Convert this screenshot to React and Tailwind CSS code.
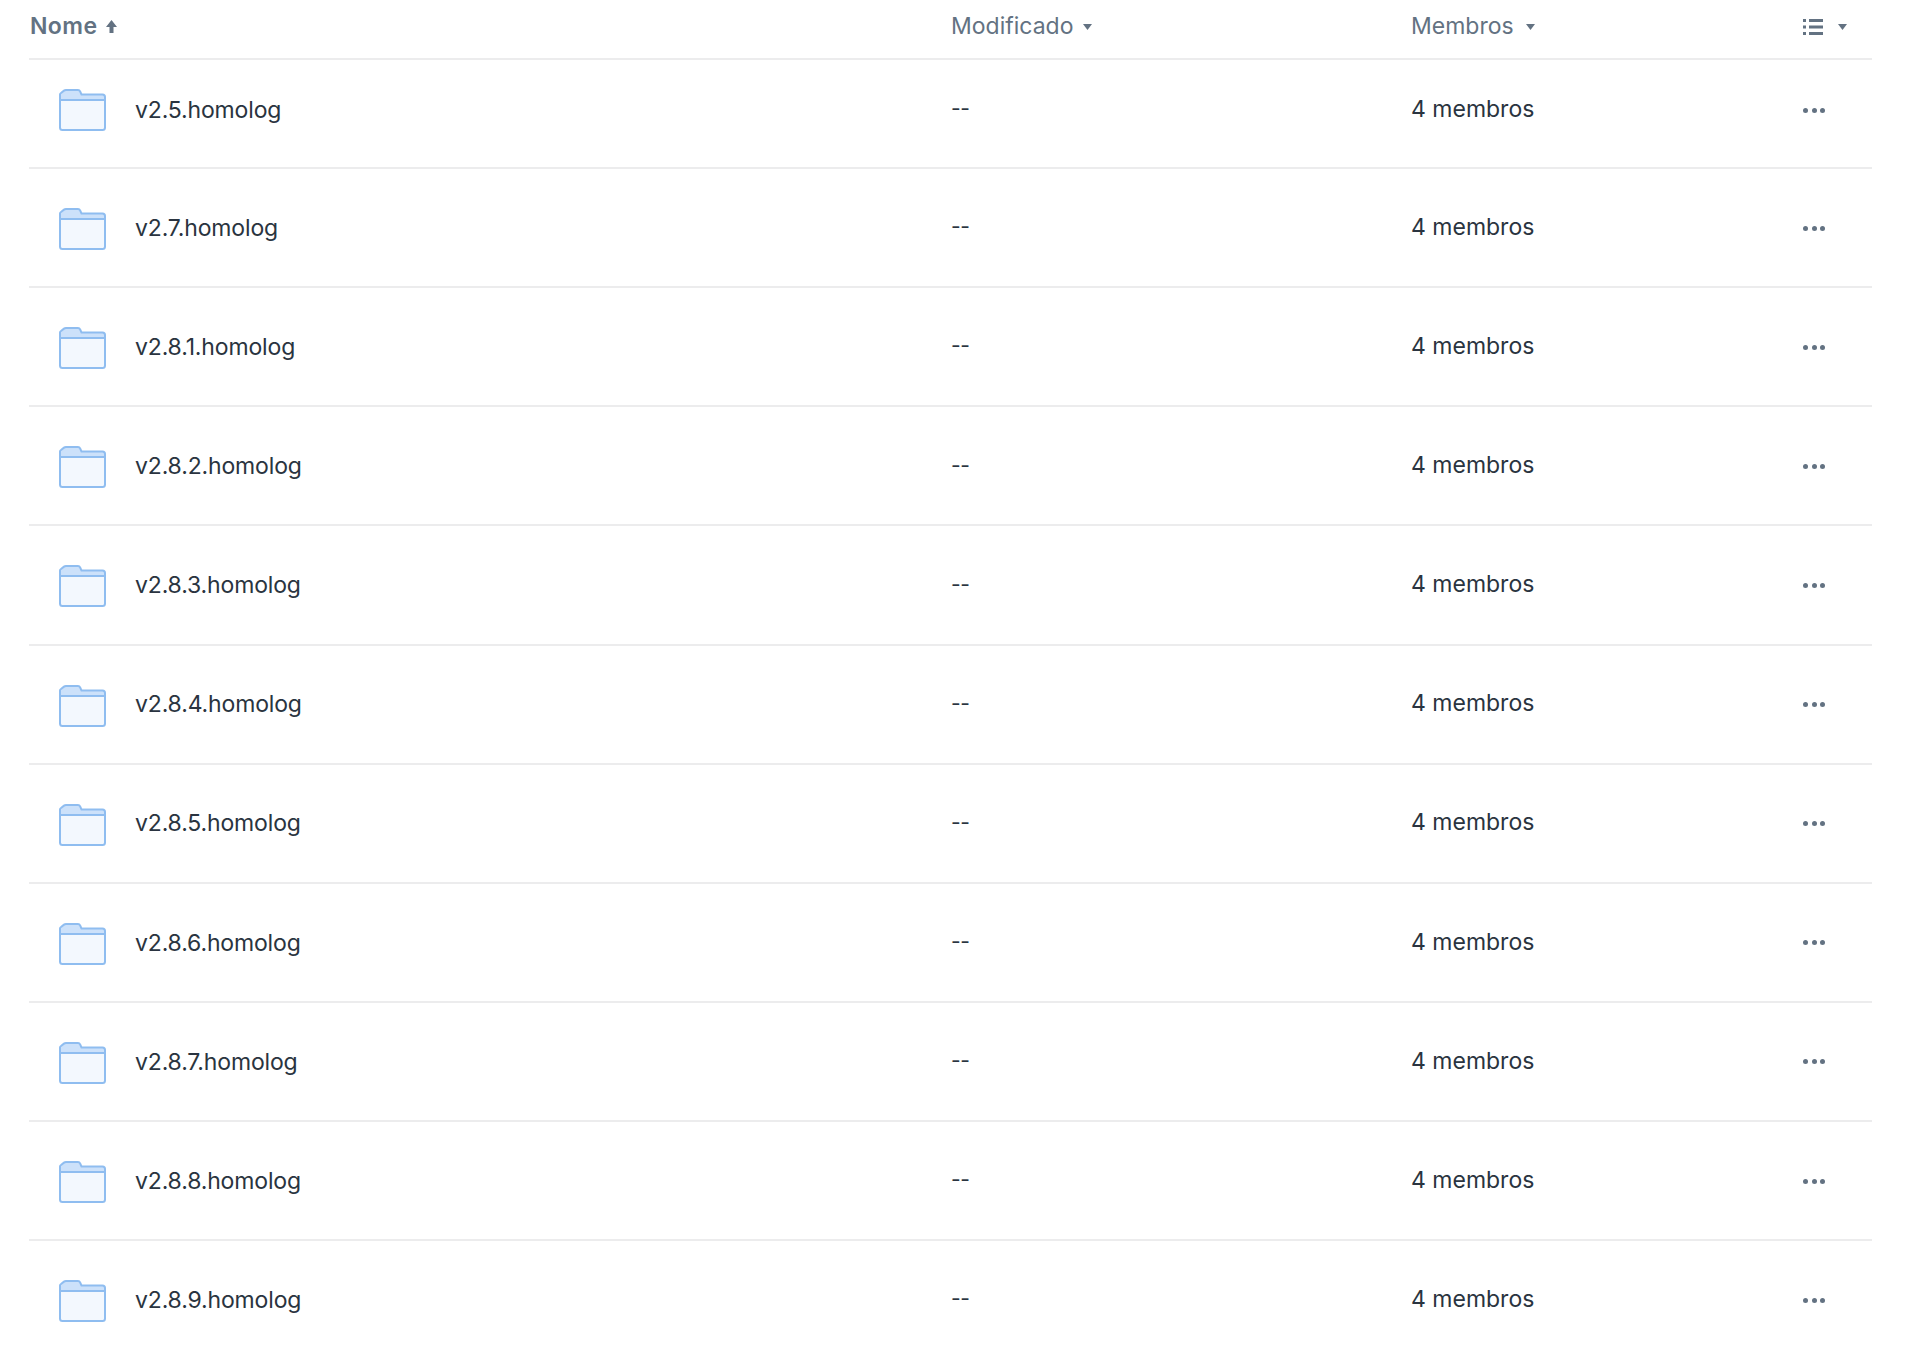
const folders = [
  "v2.5.homolog",
  "v2.7.homolog",
  "v2.8.1.homolog",
  "v2.8.2.homolog",
  "v2.8.3.homolog",
  "v2.8.4.homolog",
  "v2.8.5.homolog",
  "v2.8.6.homolog",
  "v2.8.7.homolog",
  "v2.8.8.homolog",
  "v2.8.9.homolog",
];

const Caret = ({ className }) => (
  <svg width="9" height="6" viewBox="0 0 9 6" className={className}>
    <path d="M0 0h9L4.5 6z" fill="#637282" />
  </svg>
);

const FolderIcon = ({ className }) => (
  <svg width="47" height="42" viewBox="0 0 47 42" className={`shrink-0 ${className}`}>
    <path
      d="M1 9V5.5Q1 4.6 2 4L5 1.6Q5.800 1 7 1H19Q20.500 1 21 2.200L22.500 5.500H43.500Q46 5.500 46 8V11H1Z"
      fill="#cce1fa"
    />
    <rect x="1" y="10.500" width="45" height="30.500" rx="2" fill="#f3f8fe" />
    <path
      d="M1 38.500V5.500Q1 4.600 2 4L5 1.600Q5.800 1 7 1H19Q20.500 1 21 2.200L22.500 5.500H43.500Q46 5.500 46 8V38.500Q46 41 43.500 41H3.500Q1 41 1 38.500ZM1 11H46"
      fill="none"
      stroke="#8fbdf0"
      strokeWidth="2"
      strokeLinejoin="round"
    />
  </svg>
);

const Row = ({ name, first }) => (
  <div
    className={`flex items-center border-b-2 border-[#ececed] ${
      first ? "h-[109px] pb-[7px]" : "h-[119.14px] pt-[1px]"
    }`}
  >
    <div className="flex w-[922px] items-center pl-[30px]">
      <FolderIcon className={first ? "" : "mt-[2px]"} />
      <span className="ml-[29px] text-[23px] tracking-[-0.15px] text-[#2a3440]">
        {name}
      </span>
    </div>
    <span className="w-[460px] -translate-y-[1px] text-[21px] tracking-[-0.5px] text-[#2a3440]">
      --
    </span>
    <span className="w-[392px] -translate-y-[1px] text-[23px] text-[#2a3440]">
      4 membros
    </span>
    <div className="flex gap-[3.500px]">
      <span className="h-[5px] w-[5px] rounded-full bg-[#637282]" />
      <span className="h-[5px] w-[5px] rounded-full bg-[#637282]" />
      <span className="h-[5px] w-[5px] rounded-full bg-[#637282]" />
    </div>
  </div>
);

export default function App() {
  return (
    <div className="h-[1350px] overflow-hidden bg-white pl-[29px] pr-[40px] font-['Inter',sans-serif]">
      {/* Header */}
      <div className="flex h-[60px] items-center border-b-2 border-[#ececed] pb-[5px] text-[23px] text-[#637282]">
        <div className="flex w-[922px] items-center font-semibold">
          <span className="pl-[1px] tracking-[0.4px]">Nome</span>
          <svg width="11" height="13" viewBox="0 0 11 13" className="ml-[9px]">
            <path d="M5.500 0l5.500 7H7.500v6h-4V7H0z" fill="#637282" />
          </svg>
        </div>
        <div className="flex w-[460px] items-center">
          <span>Modificado</span>
          <Caret className="ml-[10px]" />
        </div>
        <div className="flex w-[392px] items-center">
          <span>Membros</span>
          <Caret className="ml-[12px]" />
        </div>
        <svg width="20" height="16" viewBox="0 0 20 16">
          <g fill="#637282">
            <rect x="0" y="0" width="3" height="3" />
            <rect x="0" y="6.500" width="3" height="3" />
            <rect x="0" y="13" width="3" height="3" />
            <rect x="6" y="0" width="14" height="3" />
            <rect x="6" y="6.500" width="14" height="3" />
            <rect x="6" y="13" width="14" height="3" />
          </g>
        </svg>
        <Caret className="ml-[15px]" />
      </div>

      {folders.map((name, i) => (
        <Row key={name} name={name} first={i === 0} />
      ))}
    </div>
  );
}
